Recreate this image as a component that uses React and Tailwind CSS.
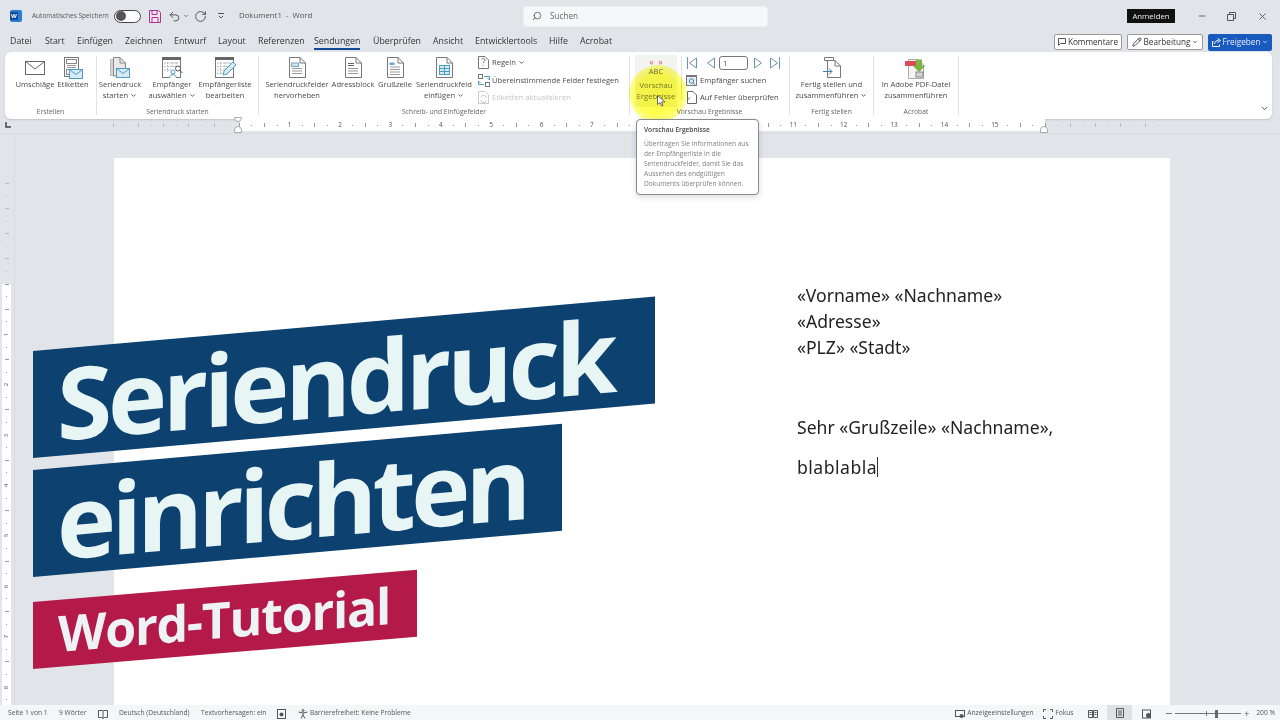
import React from 'react'
import { Search, ChevronDown, Minus, X, Pencil, Undo2, RotateCw } from 'lucide-react'

const Svg = ({ w, h, className = '', children }) => (
  <svg width={w} height={h} viewBox={`0 0 ${w} ${h}`} fill="none" className={`shrink-0 ${className}`}>
    {children}
  </svg>
)

const Chev = () => <ChevronDown size={7} strokeWidth={3} className="inline-block ml-[2px] -mt-[1px]" />

const Page = ({ x = 0, y = 0, w = 17, h = 21, stroke = '#777' }) => (
  <path d={`M${x + 0.5} ${y + 0.5}H${x + w - 6}L${x + w - 0.5} ${y + 6}V${y + h - 0.5}H${x + 0.5}Z M${x + w - 6} ${y + 0.5}V${y + 6}H${x + w - 0.5}`} fill="#fff" stroke={stroke} />
)

const Lines = ({ x = 3, ys = [11, 13.5, 16], l = 10 }) => (
  <path d={ys.map((y) => `M${x} ${y}h${l}`).join('')} stroke="#999" />
)

const MiniEnvelope = ({ x, y }) => (
  <g>
    <rect x={x + 0.5} y={y + 0.5} width="13" height="9" fill="#d4ebf4" stroke="#4f9cc0" />
    <path d={`M${x + 0.5} ${y + 0.5}l6.5 5 6.5-5`} stroke="#4f9cc0" />
  </g>
)

const IconEnvelope = () => (
  <Svg w={20} h={14}>
    <rect x=".5" y=".5" width="19" height="13" fill="#fff" stroke="#666" />
    <path d="M.5.5 10 8 19.5.5" stroke="#666" />
  </Svg>
)

const IconLabels = () => (
  <Svg w={20} h={22}>
    <rect x="1.5" y=".5" width="14" height="19" fill="#fff" stroke="#777" />
    <rect x="3.5" y="2.5" width="10" height="4" stroke="#888" />
    <path d="M4 8.5h9M4 10.5h9" stroke="#999" />
    <rect x="3.5" y="12.5" width="6" height="5" stroke="#888" />
    <MiniEnvelope x={6} y={12} />
  </Svg>
)

const IconMergeStart = () => (
  <Svg w={20} h={22}>
    <path d="M.5 2.5h4v16h-4z" fill="#d5d5d5" stroke="#bbb" />
    <path d="M3.5.5H10l5.5 5.5v13h-12z" fill="#e9e9e9" stroke="#888" />
    <path d="M10 .5V6h5.5" stroke="#888" />
    <MiniEnvelope x={6} y={11} />
  </Svg>
)

const IconRecipients = () => (
  <Svg w={21} h={22}>
    <rect x=".5" y=".5" width="18" height="20" fill="#fff" stroke="#777" />
    <rect x="0" y="0" width="19" height="3" fill="#666" />
    <path d="M2 6h15M2 9.5h15M2 13h7M5.5 5v10M10 5v5M14 5v5" stroke="#bbb" strokeDasharray="2 1" />
    <circle cx="11" cy="15" r="2" fill="#fff" stroke="#4f9cc0" />
    <path d="M7.5 21c.5-2.5 2-3.5 3.5-3.5s3 1 3.5 3.5" fill="#fff" stroke="#4f9cc0" />
    <circle cx="16" cy="11.5" r="2.5" fill="#fff" stroke="#555" />
    <path d="m18 13.5 2.5 2.5" stroke="#555" />
  </Svg>
)

const IconEditList = () => (
  <Svg w={21} h={22}>
    <rect x=".5" y=".5" width="18" height="20" fill="#fff" stroke="#777" />
    <rect x="0" y="0" width="19" height="3" fill="#666" />
    <path d="M2 6h15M2 9.5h15M2 13h7M2 16.5h5M5.5 5v12M10 5v8M14 5v5" stroke="#bbb" strokeDasharray="2 1" />
    <path d="m8 18 1-4 9-9 3 3-9 9z" fill="#d4ebf4" stroke="#4f9cc0" />
  </Svg>
)

const IconHighlightDoc = () => (
  <Svg w={17} h={21}>
    <Page />
    <rect x="2.5" y="6" width="7" height="3.5" fill="#cfe3ee" stroke="#7aa6bf" />
    <Lines ys={[11.5, 14, 16.5]} />
  </Svg>
)

const IconBlockDoc = () => (
  <Svg w={17} h={21}>
    <Page />
    <path d="M3 6.5h6M3 8.5h6" stroke="#666" />
    <Lines ys={[11.5, 14, 16.5]} />
  </Svg>
)

const IconGreetingDoc = () => (
  <Svg w={17} h={21}>
    <Page />
    <rect x="2.5" y="5.5" width="5" height="2.5" fill="#6ea6c9" />
    <Lines ys={[10, 12.5, 15, 17.5]} />
  </Svg>
)

const IconFieldDoc = () => (
  <Svg w={17} h={21}>
    <Page />
    <rect x="3.5" y="8.5" width="10" height="9" fill="#d4ebf4" stroke="#4f9cc0" />
    <path d="M8.5 8.5v9M3.5 11.5h10M3.5 14.5h10" stroke="#4f9cc0" />
  </Svg>
)

const IconRules = () => (
  <Svg w={11} h={13}>
    <path d="M.5.5H7L10.5 4v8.5H.5z" fill="#fff" stroke="#777" />
    <path d="M3.5 3.5C4 2 7 2 7 4c0 1.5-2 1.5-2 3M5 9v1" stroke="#777" />
  </Svg>
)

const IconMatch = () => (
  <Svg w={12} h={13} className="-mr-[1px]">
    <rect x=".5" y=".5" width="4" height="4" stroke="#777" />
    <rect x="7.5" y="8.5" width="4" height="4" stroke="#777" />
    <path d="M6 2.5h5.5v3M9.5 4l2 2 .5-2M6 10.5H.5v-3M2.5 9l-2-2-.5 2" stroke="#4f9cc0" />
  </Svg>
)

const IconUpdate = () => (
  <Svg w={11} h={13}>
    <path d="M.5.5H7L10.5 4v8.5H.5z" fill="#fff" stroke="#ccc" />
    <path d="M3 6a2.5 2.5 0 0 1 5 1M8 9.5a2.5 2.5 0 0 1-5-.5" stroke="#ccc" />
  </Svg>
)

const IconSearchRecipient = () => (
  <Svg w={11} h={11}>
    <rect x=".5" y=".5" width="10" height="10" fill="#e8eef2" stroke="#777" />
    <rect x="0" y="0" width="11" height="2" fill="#777" />
    <circle cx="5.5" cy="6" r="2.2" stroke="#3b86b0" />
    <path d="m7 8 2 2" stroke="#3b86b0" />
  </Svg>
)

const IconCheckErrors = () => (
  <Svg w={10} h={13}>
    <path d="M.5.5H6L9.5 4v8.5H.5z" fill="#fff" stroke="#666" />
    <path d="M.5 9 3 6.5" stroke="#666" />
  </Svg>
)

const IconFinish = () => (
  <Svg w={18} h={21}>
    <path d="M1.5.5h9v3h-9z" fill="#fff" stroke="#777" />
    <path d="M4.5 3.5H12L17.5 9v11.5h-13z" fill="#fff" stroke="#777" />
    <path d="M12 3.5V9h5.5" stroke="#777" />
    <path d="M0 14.5h9M6 11.5l3 3-3 3" stroke="#3b86b0" />
  </Svg>
)

const IconPdf = () => (
  <Svg w={22} h={22}>
    <path d="M3.5 2.5H13L18.5 8v13.5h-15z" fill="#f4f4f4" stroke="#aaa" />
    <rect x="0" y="4" width="11" height="5" fill="#dc4a57" />
    <path d="M10 .5h6v6h3.5L13 13 6.5 6.5H10z" fill="#7cb342" transform="translate(1 2)" />
    <rect x="11" y="15" width="7" height="5" fill="#cfd6d8" stroke="#888" />
  </Svg>
)

const NavTri = ({ dir, bar }) => (
  <Svg w={11} h={12}>
    {dir === 'left' ? <path d="M9.5 1v10L2.5 6z" stroke="#6a93ad" /> : <path d="M1.5 1v10l7-5z" stroke="#6a93ad" />}
    {bar && (dir === 'left' ? <path d="M.5 0v12" stroke="#6a93ad" /> : <path d="M10.5 0v12" stroke="#6a93ad" />)}
  </Svg>
)

const BigButton = ({ width, icon, lines, chevron }) => (
  <div className={`${width} flex flex-col items-center whitespace-nowrap`}>
    <div className="h-[23px] flex items-center justify-center">{icon}</div>
    <div className="leading-[11px] text-center">
      {lines.map((line, i) => (
        <div key={line}>
          {line}
          {chevron && i === lines.length - 1 && <Chev />}
        </div>
      ))}
    </div>
  </div>
)

const Group = ({ width, label, children }) => (
  <div className={`${width} flex flex-col border-r border-[#e2e2e2] relative`}>
    <div className="flex flex-1 items-start">{children}</div>
    <div className="h-[10px] leading-[10px] text-center text-[6.8px] text-[#666] mb-[-2px]">{label}</div>
  </div>
)

const SmallRow = ({ icon, children, muted }) => (
  <div className={`h-[17.5px] flex items-center gap-[3px] whitespace-nowrap ${muted ? 'text-[#c4c4c4]' : ''}`}>
    {icon}
    <span>{children}</span>
  </div>
)

const tabs = [
  ['Datei', 'w-[35px]'],
  ['Start', 'w-[32px]'],
  ['Einfügen', 'w-[48px]'],
  ['Zeichnen', 'w-[49px]'],
  ['Entwurf', 'w-[44px]'],
  ['Layout', 'w-[40px]'],
  ['Referenzen', 'w-[56px]'],
  ['Sendungen', 'w-[59px]'],
  ['Überprüfen', 'w-[60px]'],
  ['Ansicht', 'w-[42px]'],
  ['Entwicklertools', 'w-[74px]'],
  ['Hilfe', 'w-[31px]'],
  ['Acrobat', 'w-[40px]'],
]

function TitleBar() {
  return (
    <div className="h-[32px] flex items-center text-[7.8px] text-[#555] shrink-0 relative">
      <div className="ml-[10px] w-[12px] h-[12px] rounded-[2px] bg-[#2b7cd3] relative shrink-0">
        <div className="absolute left-0 top-[2px] w-[8px] h-[8px] bg-[#124a94] text-white text-[6px] font-bold leading-[8px] text-center">W</div>
      </div>
      <span className="ml-[10px] w-[82px] whitespace-nowrap text-[6.5px]">Automatisches Speichern</span>
      <div className="w-[27px] h-[13px] rounded-full border border-[#444] bg-white flex items-center pl-[1px]">
        <div className="w-[10px] h-[10px] rounded-full bg-[#555]" />
      </div>
      <Svg w={12} h={13} className="ml-[8px]">
        <path d="M.5.5h9l2 2v10H.5z" fill="#f3e3f0" stroke="#a8388f" />
        <path d="M3 .5v4h5v-4M3 12.5v-5h6v5" stroke="#a8388f" />
      </Svg>
      <Undo2 size={13} strokeWidth={1.8} className="ml-[7px] text-[#555]" />
      <ChevronDown size={6} strokeWidth={3} className="ml-[2px]" />
      <RotateCw size={13} strokeWidth={1.8} className="ml-[5px] text-[#555]" />
      <Svg w={6} h={6} className="ml-[11px]">
        <path d="M0 .5h6M1 3l2 2 2-2" stroke="#555" />
      </Svg>
      <span className="ml-[15px] w-[284px] whitespace-nowrap">Dokument1&nbsp; -&nbsp; Word</span>
      <div className="w-[245px] h-[21px] rounded-[3px] bg-[#f6f7f9] border border-[#eceef1] flex items-center text-[#666]">
        <Search size={10} strokeWidth={2.2} className="ml-[8px] -scale-x-100" />
        <span className="ml-[8px] text-[8.2px]">Suchen</span>
      </div>
      <div className="ml-auto flex items-center">
        <div className="bg-[#111] text-[#eee] w-[48px] h-[14px] leading-[14px] text-center mr-[22px]">Anmelden</div>
        <Minus size={10} strokeWidth={2} className="mr-[20px]" />
        <Svg w={9} h={9} className="mr-[21px]">
          <path d="M.5 2.5h6v6h-6zM2.5 2.5v-2h6v6h-2" stroke="#555" />
        </Svg>
        <X size={11} strokeWidth={2} className="mr-[12px]" />
      </div>
    </div>
  )
}

function TabRow() {
  return (
    <div className="h-[20px] flex items-center shrink-0 pl-[10px] text-[8.8px] text-[#333]">
      {tabs.map(([name, width]) => (
        <div key={name} className={`${width} relative whitespace-nowrap`}>
          {name}
          {name === 'Sendungen' && <div className="absolute left-0 top-[13px] w-[46px] h-[2px] bg-[#124a94]" />}
        </div>
      ))}
      <div className="ml-auto flex items-center gap-[5px] mr-[8px] text-[8.2px]">
        <div className="w-[68px] h-[16px] rounded-[2px] bg-white border border-[#9a9a9a] flex items-center justify-center gap-[2px]">
          <Svg w={8} h={8}>
            <path d="M.5.5h7v5h-5L.5 7.5z" stroke="#555" />
          </Svg>
          Kommentare
        </div>
        <div className="w-[76px] h-[16px] rounded-[2px] bg-white border border-[#9a9a9a] flex items-center justify-center gap-[2px]">
          <Pencil size={10} strokeWidth={2} />
          Bearbeitung
          <ChevronDown size={6} strokeWidth={3} />
        </div>
        <div className="w-[64px] h-[17px] rounded-[2px] bg-[#185abd] text-[#e8eefa] flex items-center justify-center gap-[2px]">
          <Svg w={9} h={9}>
            <path d="M1.5 3.5H.5v5h7v-2M2.5 6c0-2.5 2-3.5 4-3.5M5.5.5l3 2-3 2" stroke="#fff" />
          </Svg>
          Freigeben
          <ChevronDown size={6} strokeWidth={3} />
        </div>
      </div>
    </div>
  )
}

function Ribbon() {
  return (
    <div className="ml-[5px] mr-[8px] h-[67px] rounded-[6px] bg-white shadow-[0_1px_2px_rgba(0,0,0,0.15)] flex py-[4px] text-[7.6px] text-[#4a4a4a] shrink-0 relative">
      <Group width="w-[92px]" label="Erstellen">
        <div className="w-[8px]" />
        <BigButton width="w-[44px]" icon={<IconEnvelope />} lines={['Umschläge']} />
        <BigButton width="w-[32px]" icon={<IconLabels />} lines={['Etiketten']} />
      </Group>
      <Group width="w-[162px]" label="Seriendruck starten">
        <BigButton width="w-[46px]" icon={<IconMergeStart />} lines={['Seriendruck', 'starten']} chevron />
        <BigButton width="w-[58px]" icon={<IconRecipients />} lines={['Empfänger', 'auswählen']} chevron />
        <BigButton width="w-[48px]" icon={<IconEditList />} lines={['Empfängerliste', 'bearbeiten']} />
      </Group>
      <Group width="w-[371px]" label="Schreib- und Einfügefelder">
        <BigButton width="w-[76px]" icon={<IconHighlightDoc />} lines={['Seriendruckfelder', 'hervorheben']} />
        <BigButton width="w-[36px]" icon={<IconBlockDoc />} lines={['Adressblock']} />
        <BigButton width="w-[48px]" icon={<IconGreetingDoc />} lines={['Grußzeile']} />
        <BigButton width="w-[50px]" icon={<IconFieldDoc />} lines={['Seriendruckfeld', 'einfügen']} chevron />
        <div className="ml-[9px] -mt-[2px]">
          <SmallRow icon={<IconRules />}>
            Regeln
            <Chev />
          </SmallRow>
          <SmallRow icon={<IconMatch />}>Übereinstimmende Felder festlegen</SmallRow>
          <SmallRow icon={<IconUpdate />} muted>Etiketten aktualisieren</SmallRow>
        </div>
      </Group>
      <Group width="w-[160px]" label="Vorschau Ergebnisse">
        <div className="ml-[5px] w-[42px] h-[52px] -mt-[1px] bg-[#f3f3f3] flex flex-col items-center text-[#777] leading-[11px]">
          <div className="mt-[3px] text-[9px] leading-[8px] text-[#d9605a] whitespace-nowrap">«&nbsp;&nbsp;»</div>
          <div className="text-[7.5px] leading-[9px] mt-[1px] text-[#666]">ABC</div>
          <div className="mt-[4px]">Vorschau</div>
          <div>Ergebnisse</div>
        </div>
        <div className="w-px h-[44px] ml-[4px] bg-[#e2e2e2]" />
        <div className="ml-[4px] -mt-[2px]">
          <div className="h-[17.5px] flex items-center ml-[1px]">
            <NavTri dir="left" bar />
            <div className="ml-[7px]"><NavTri dir="left" /></div>
            <div className="ml-[3px] w-[29px] h-[14px] rounded-[3px] border border-[#777] pl-[3px] leading-[12px]">1</div>
            <div className="ml-[5px]"><NavTri dir="right" /></div>
            <div className="ml-[5px]"><NavTri dir="right" bar /></div>
          </div>
          <SmallRow icon={<IconSearchRecipient />}>Empfänger suchen</SmallRow>
          <SmallRow icon={<div className="ml-[1px]"><IconCheckErrors /></div>}>Auf Fehler überprüfen</SmallRow>
        </div>
      </Group>
      <Group width="w-[84px]" label="Fertig stellen">
        <BigButton width="w-[84px]" icon={<IconFinish />} lines={['Fertig stellen und', 'zusammenführen']} chevron />
      </Group>
      <Group width="w-[85px]" label="Acrobat">
        <BigButton width="w-[85px]" icon={<IconPdf />} lines={['In Adobe PDF-Datei', 'zusammenführen']} />
      </Group>
      <ChevronDown size={9} strokeWidth={2.4} className="absolute right-[3px] bottom-[6px] text-[#444]" />
    </div>
  )
}

// quarter-inch cells around the left margin of the page
const rulerCells = Array.from({ length: 84 }, (_, i) => i - 10)
const vRulerCells = Array.from({ length: 42 }, (_, i) => i - 8)

const rulerCellBg = (k) => {
  if (k === 0) return 'bg-[linear-gradient(to_right,transparent_50%,white_50%)]'
  if (k === 64) return 'bg-[linear-gradient(to_right,white_50%,transparent_50%)]'
  return k > 0 && k < 64 ? 'bg-white' : ''
}

function Ruler() {
  return (
    <div className="h-[15px] shrink-0 flex items-center relative border-b border-[#d8dbe0] pb-[2px]">
      <Svg w={6} h={6} className="ml-[5px]">
        <path d="M1 0v5h5" stroke="#444" strokeWidth="1.5" />
      </Svg>
      <div className="ml-[96px] h-[12px] flex items-center text-[6.5px] text-[#555] relative">
        {rulerCells.map((k) => {
          const inside = k >= 0 && k <= 64
          const tick = inside ? 'bg-[#999]' : 'bg-[#b9bcc1]'
          // 8, 9 and 10 sit under the tooltip
          const covered = k >= 32 && k <= 40
          return (
            <div key={k} className={`w-[12.6px] h-[12px] flex items-center justify-center ${rulerCellBg(k)}`}>
              {covered ? null : k > 0 && k < 64 && k % 4 === 0 ? <span>{k / 4}</span> : k % 2 === 0 ? <div className={`w-px h-[4px] ${tick}`} /> : <div className={`w-px h-px ${tick}`} />}
            </div>
          )
        })}
      </div>
      <div className="absolute left-[233.5px] top-[-2px] w-[8px] h-[5px] bg-white border border-[#aaa] rounded-b-full" />
      <div className="absolute left-[233.5px] top-[7px] w-[8px] h-[7px] bg-white border border-[#aaa] rounded-t-[4px]" />
      <div className="absolute left-[1040px] top-[7px] w-[8px] h-[7px] bg-white border border-[#aaa] rounded-t-[4px]" />
    </div>
  )
}

function VerticalRuler() {
  return (
    <div className="w-[114px] shrink-0 overflow-hidden">
      <div className="w-[15px] h-full border-r border-[#d8dbe0] pt-[43px] pl-[2px] overflow-hidden">
        <div className="w-[9px] text-[6px] text-[#555]">
          {vRulerCells.map((k) => {
            const tick = k >= 0 ? 'bg-[#999]' : 'bg-[#b9bcc1]'
            const bg = k === 0 ? 'bg-[linear-gradient(to_bottom,transparent_50%,white_50%)]' : k > 0 ? 'bg-white' : ''
            return (
              <div key={k} className={`h-[12.6px] flex items-center justify-center ${bg}`}>
                {k > 0 && k % 4 === 0 ? <span className="-rotate-90">{k / 4}</span> : k % 2 === 0 ? <div className={`w-[4px] h-px ${tick}`} /> : <div className={`w-px h-px ${tick}`} />}
              </div>
            )
          })}
        </div>
      </div>
    </div>
  )
}

function DocPage() {
  return (
    <div className="mt-[24px] w-[1056px] bg-white pl-[683px] pt-[124px] text-[17.6px] leading-[26px] text-[#222] font-['Noto_Sans',sans-serif] overflow-hidden">
      <div>«Vorname» «Nachname»</div>
      <div>«Adresse»</div>
      <div>«PLZ» «Stadt»</div>
      <div className="mt-[54px]">Sehr «Grußzeile» «Nachname»,</div>
      <div className="mt-[14px] flex items-center tracking-[0.5px]">
        blablabla
        <div className="w-px h-[20px] bg-[#333]" />
      </div>
    </div>
  )
}

function StatusBar() {
  return (
    <div className="h-[15px] shrink-0 bg-[#f5f6f7] flex items-center pt-[2px] text-[6.7px] text-[#555] whitespace-nowrap">
      <span className="ml-[8px] w-[51px]">Seite 1 von 1</span>
      <span className="w-[39px]">9 Wörter</span>
      <Svg w={10} h={10}>
        <path d="M.5 1.5h4l.5.5.5-.5h4v7h-3L5 9.5 3.5 8.5h-3zM5 2v7" stroke="#555" />
      </Svg>
      <span className="ml-[11px] w-[82px]">Deutsch (Deutschland)</span>
      <span className="w-[76px]">Textvorhersagen: ein</span>
      <Svg w={9} h={10}>
        <rect x=".5" y=".5" width="8" height="9" stroke="#555" />
        <circle cx="4.5" cy="5.5" r="2" fill="#555" />
      </Svg>
      <Svg w={10} h={10} className="ml-[12px]">
        <circle cx="5" cy="1.5" r="1" stroke="#555" />
        <path d="M.5 3 5 4l4.5-1M5 4v2L3 9.5M5 6l2 3.5" stroke="#555" />
      </Svg>
      <span className="ml-[2px]">Barrierefreiheit: Keine Probleme</span>
      <div className="ml-auto flex items-center h-full">
        <Svg w={10} h={10}>
          <rect x=".5" y="1.5" width="9" height="6" stroke="#555" />
          <circle cx="6.5" cy="7" r="2" fill="#555" />
        </Svg>
        <span className="ml-[2px] w-[76px]">Anzeigeeinstellungen</span>
        <Svg w={10} h={10}>
          <path d="M.5 3V.5H3M7 .5h2.5V3M.5 7v2.5H3M7 9.5h2.5V7" stroke="#555" />
        </Svg>
        <span className="ml-[2px] w-[33px]">Fokus</span>
        <Svg w={10} h={10}>
          <path d="M.5 1.5h4v7h-4zM5.5 1.5h4v7h-4zM1.5 3.5h2M1.5 5.5h2M6.5 3.5h2M6.500 5.500h2" stroke="#555" />
        </Svg>
        <div className="ml-[9px] w-[25px] h-[15px] -mt-[2px] bg-[#dfe1e4] flex items-center justify-center">
          <Svg w={8} h={10}>
            <path d="M.5.5h7v9h-7zM2 3h4M2 5h4M2 7h4" stroke="#555" />
          </Svg>
        </div>
        <Svg w={10} h={10} className="ml-[10px]">
          <rect x=".5" y="1" width="8" height="8" stroke="#555" />
          <circle cx="6.5" cy="6.5" r="2.5" fill="#555" />
        </Svg>
        <div className="ml-[14px] w-[6px] h-px bg-[#777]" />
        <div className="ml-[3px] w-[66px] h-px bg-[#777] flex items-center relative">
          <div className="ml-[31px] w-px h-[5px] bg-[#777]" />
          <div className="ml-[8px] w-[3px] h-[8px] bg-[#666]" />
        </div>
        <div className="ml-[3px] w-[7px] text-[9px] leading-[9px]">+</div>
        <span className="ml-[5px] mr-[5px]">200 %</span>
      </div>
    </div>
  )
}

function Banners() {
  return (
    <div className="font-['Open_Sans',sans-serif] font-bold">
      <div className="absolute left-[33px] top-[351px] w-[622px] h-[107px] origin-top-left skew-y-[-5deg] bg-[#0c4170] text-[#e8f5f5] text-[100px] leading-[107px] tracking-[-4.2px] pl-[24px] whitespace-nowrap">Seriendruck</div>
      <div className="absolute left-[33px] top-[470px] w-[529px] h-[107px] origin-top-left skew-y-[-5deg] bg-[#0c4170] text-[#e8f5f5] text-[100px] leading-[107px] tracking-[-4.7px] pl-[24px] whitespace-nowrap">einrichten</div>
      <div className="absolute left-[33px] top-[602px] w-[384px] h-[67px] origin-top-left skew-y-[-4.8deg] bg-[#b31a4a] text-[#eef2f5] text-[50px] leading-[67px] tracking-[-1.2px] pl-[25px] whitespace-nowrap">Word-Tutorial</div>
    </div>
  )
}

function Tooltip() {
  return (
    <div className="absolute left-[636px] top-[119px] w-[123px] h-[76px] bg-white border border-[#8a8a8a] rounded-[4px] shadow-[0_2px_6px_rgba(0,0,0,0.15)] pl-[7px] pt-[5px] text-[6.6px] leading-[10px] text-[#808080] whitespace-nowrap">
      <div className="font-semibold text-[#444] mb-[4px]">Vorschau Ergebnisse</div>
      <div>Übertragen Sie Informationen aus</div>
      <div>der Empfängerliste in die</div>
      <div>Seriendruckfelder, damit Sie das</div>
      <div>Aussehen des endgültigen</div>
      <div>Dokuments überprüfen können.</div>
    </div>
  )
}

export default function App() {
  return (
    <div className="w-[1280px] h-[720px] overflow-hidden relative flex flex-col bg-[#e1e4e9] font-['Open_Sans',sans-serif]">
      <TitleBar />
      <TabRow />
      <Ribbon />
      <Ruler />
      <div className="flex-1 flex min-h-0">
        <VerticalRuler />
        <DocPage />
      </div>
      <StatusBar />
      <Banners />
      <div className="absolute left-[629px] top-[65px] w-[58px] h-[58px] rounded-full mix-blend-multiply bg-[radial-gradient(circle,rgba(255,255,70,1)_0%,rgba(255,255,70,0.95)_50%,rgba(255,255,70,0)_100%)]" />
      <Tooltip />
      <Svg w={9} h={12} className="absolute left-[657px] top-[95px]">
        <path d="M.5.5v9l2.5-2 1.5 3.5 1.5-.5L4.500 7H8z" fill="#fff" stroke="#666" />
      </Svg>
    </div>
  )
}
